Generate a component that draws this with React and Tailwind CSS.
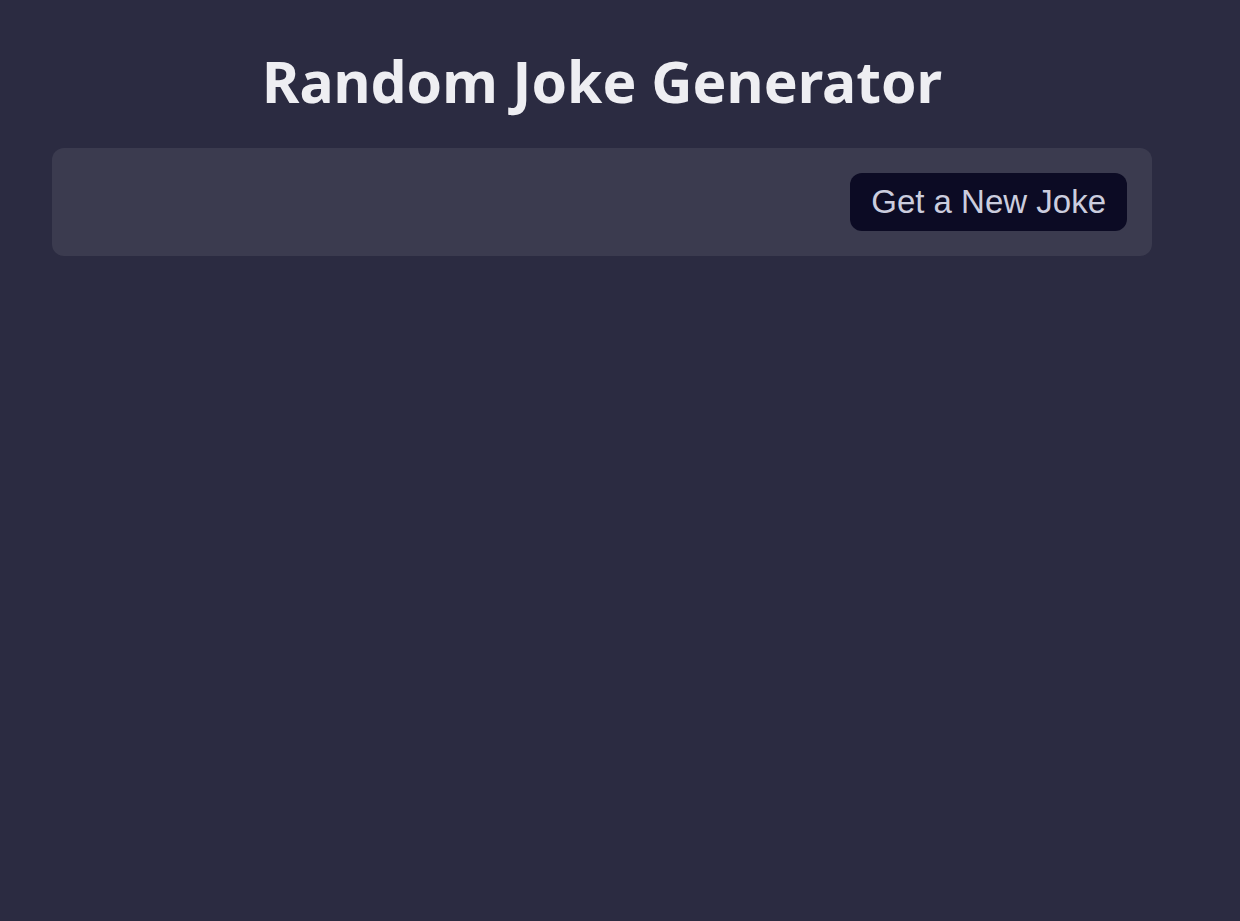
export default function App() {
    return (
        <div className="min-h-screen bg-[#2b2b41] font-['Noto_Sans',sans-serif]">
            <div className="w-[1100px] ml-[52px] pt-[43px]">
                <h1 className="text-center text-[57px] leading-[76px] font-bold text-[#eeeef2]">
                    Random Joke Generator
                </h1>
                <div className="mt-[29px] h-[108px] rounded-xl bg-[#3b3b4f] flex items-center justify-end pr-[25px]">
                    <button className="bg-[#0c0b24] text-[#cbcdde] text-[33px] leading-[38px] font-['Liberation_Sans',sans-serif] px-[21px] py-[10px] rounded-xl">
                        Get a New Joke
                    </button>
                </div>
            </div>
        </div>
    );
}
